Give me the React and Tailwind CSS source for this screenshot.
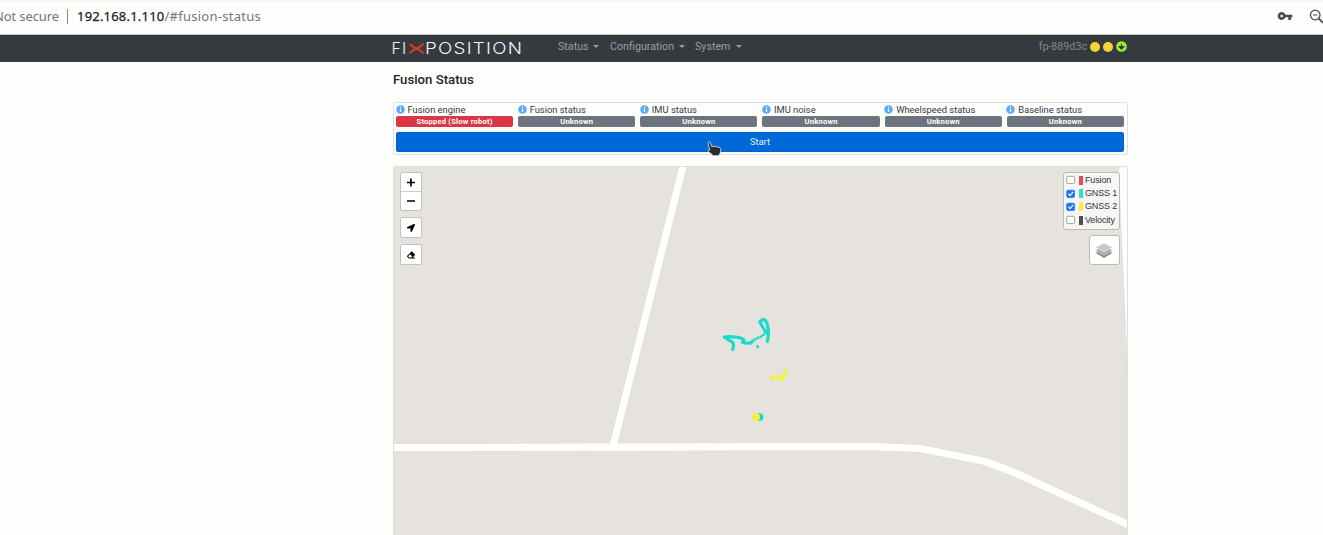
import { MdVpnKey } from "react-icons/md";
import { FaLocationArrow, FaEraser } from "react-icons/fa";

const statuses = [
  { label: "Fusion engine", value: "Stopped (Slow robot)", color: "bg-[#dc3545]" },
  { label: "Fusion status", value: "Unknown", color: "bg-[#6c757d]" },
  { label: "IMU status", value: "Unknown", color: "bg-[#6c757d]" },
  { label: "IMU noise", value: "Unknown", color: "bg-[#6c757d]" },
  { label: "Wheelspeed status", value: "Unknown", color: "bg-[#6c757d]" },
  { label: "Baseline status", value: "Unknown", color: "bg-[#6c757d]" },
];

const layers = [
  { label: "Fusion", on: false, color: "bg-[#df4e5c]" },
  { label: "GNSS 1", on: true, color: "bg-[#2fdfd0]" },
  { label: "GNSS 2", on: true, color: "bg-[#f0ee4a]" },
  { label: "Velocity", on: false, color: "bg-[#4e4e52]" },
];

function AddressBar() {
  return (
    <div className="flex h-[35px] items-start justify-between overflow-hidden border-t-2 border-b border-t-[#f7f7f6] border-b-[#c9c9c9] bg-[#fefefd] font-['Noto_Sans',sans-serif] text-[13px] leading-[18px]">
      <div className="flex pt-[5px] whitespace-nowrap text-[#757575]">
        <span className="-ml-[10px] w-[69px] text-right tracking-[-0.1px]">Not secure</span>
        <span className="mt-[2px] ml-[8px] h-[15px] w-px bg-[#8a8a8a]" />
        <span className="ml-[9px] tracking-[0.2px] text-[#222] [-webkit-text-stroke:0.25px_#222]">192.168.1.110</span>
        <span className="tracking-[0.27px]">/#fusion-status</span>
      </div>
      <div className="flex items-center pt-[6px] text-[#4a4a4a]">
        <MdVpnKey className="h-[16px] w-[16px]" />
        <svg className="ml-[16px] h-[16px] w-[14px]" viewBox="0 0 14 16" fill="none" stroke="currentColor">
          <circle cx="6.2" cy="7" r="4.8" strokeWidth="1.3" />
          <path d="M4 7h4.4" strokeWidth="1" />
          <path d="M9.6 10.4 14 14.8" strokeWidth="1.8" />
        </svg>
      </div>
    </div>
  );
}

function Logo() {
  return (
    <div className="flex h-[14px] w-[129px] items-center font-['Inter',sans-serif] text-[16px] leading-[14px] font-light whitespace-nowrap text-[#f4f4f4]">
      <span className="-ml-[1.5px] w-[17.5px] tracking-[1.2px]">FI</span>
      <svg className="h-[11px] w-[15px] shrink-0" viewBox="0 0 15 11" fill="none" stroke="#e0362b" strokeWidth="2">
        <path d="M0.5 0.9 5 4.4q2.5 1.4 5 0L14.5 0.9M0.5 10.1 5 6.6q2.5-1.4 5 0l4.5 3.5" />
      </svg>
      <span className="ml-px origin-left scale-x-[1.17] tracking-[1.1px]">POSITION</span>
    </div>
  );
}

function NavItem({ children, className }) {
  return (
    <span className={`flex items-center justify-between ${className}`}>
      {children}
      <svg className="h-[3px] w-[6px]" viewBox="0 0 6 3" fill="currentColor">
        <path d="M0 0h6L3 3z" />
      </svg>
    </span>
  );
}

function Navbar() {
  return (
    <nav className="flex h-[27px] items-center bg-[#343a40] font-['Roboto',sans-serif] text-[10.7px] leading-[14px] text-[#9a9da0]">
      <div className="ml-[393px] flex w-[734px] -translate-y-[2px] items-center">
        <div className="pt-[3px]"><Logo /></div>
        <NavItem className="ml-[36px] w-[41px]">Status</NavItem>
        <NavItem className="ml-[11px] w-[75px]">Configuration</NavItem>
        <NavItem className="ml-[10px] w-[47px]">System</NavItem>
        <div className="ml-auto flex items-center">
          <span className="text-[#85898c]">fp-889d3c</span>
          <span className="ml-[3px] h-[10px] w-[10px] rounded-full bg-[#f5d33b]" />
          <span className="ml-[3px] h-[10px] w-[10px] rounded-full bg-[#f5d33b]" />
          <svg className="ml-[3px] h-[11px] w-[11px]" viewBox="0 0 11 11">
            <circle cx="5.5" cy="5.5" r="5.3" fill="#9df22d" />
            <path d="M5.5 2.7v4M3.2 5.7l2.3 2.5 2.3-2.5z" stroke="#34402d" strokeWidth="1.2" fill="#34402d" />
          </svg>
        </div>
      </div>
    </nav>
  );
}

function StatusPanel() {
  return (
    <section className="relative mt-[15px] h-[53px] rounded-[2px] border border-[#dfdfe0] pt-px pr-[3px] pl-[2px]">
      <div className="grid grid-cols-6 gap-[5px]">
        {statuses.map((s) => (
          <div key={s.label}>
            <div className="flex h-[11px] items-center text-[9.35px] leading-[11px] whitespace-nowrap text-[#343a40]">
              <svg className="mr-[3px] -ml-[0.5px] h-[9px] w-[9px]" viewBox="0 0 9 9">
                <circle cx="4.5" cy="4.5" r="4.3" fill="#5caaf8" />
                <path d="M4.5 1.8v1.2M4.5 3.8v3.2" stroke="#fff" strokeWidth="1.2" />
              </svg>
              {s.label}
            </div>
            <div className={`${s.color} mt-px h-[11px] rounded-[2px] text-center text-[7.6px] leading-[11px] font-bold tracking-[0.2px] text-white`}>
              {s.value}
            </div>
          </div>
        ))}
      </div>
      <button className="mt-[5px] block h-[20px] w-full rounded-[2px] border border-[#0062cc] bg-[#0069d9] text-[9.4px] leading-[18px] text-[#e4effc]">
        Start
      </button>
      <svg className="absolute top-[38px] left-[313px] h-[16px] w-[15px]" viewBox="0 0 15 16">
        <path
          d="M1 1.8C1.2.5 3 .5 3.4 1.7L4.7 5.6 7 5.2l1.2.6 1.5-.3 1.3.7 1.9.3.9 1.7-.2 3.3-1.3 1.7v1.5H5.2v-1.2L1.4 10.7C.4 9.7 1.1 8.5 2.6 9z"
          fill="#2b2c2f" stroke="#e8e8ea" strokeWidth="0.8"
        />
      </svg>
    </section>
  );
}

const gnssOne = "M724.5 337.2 729 336.6 736 337 741.5 338.3 744 340 742.5 342.3 746 343.2 750.5 343 752.5 341.2M724.5 337.2 728 339.5 733 342.6 733.5 345.5 732.7 349.5M767.3 341.5 768.3 336 768.5 330 767 323.5 765 319.8 762.5 319.6 759.8 322 761.5 325 764.5 330 766.8 333";

function MapCanvas() {
  return (
    <svg className="absolute inset-0 h-full w-full" viewBox="394 167 733 368" preserveAspectRatio="xMinYMin slice" fill="none">
      <path d="M1118.5 166H1128V386z" fill="#fefefe" stroke="#dcdce4" strokeWidth="0.7" />
      <path d="M506.5 452v83M845.5 441v11" stroke="#dfddd9" strokeWidth="0.6" />
      <g stroke="#dddce0" strokeWidth="8.2">
        <path d="M684 162 613 445" />
        <path d="M393 447.7 700 446.8 870 446.4 920 448.5 985 461.5 1012 471.5 1128 524.5" strokeLinejoin="round" />
      </g>
      <g stroke="#fffffe" strokeWidth="7.2">
        <path d="M684 162 613 446" />
        <path d="M393 447.7 700 446.8 870 446.4 920 448.5 985 461.5 1012 471.5 1128 524.5" strokeLinejoin="round" />
      </g>
      <path d={gnssOne} stroke="#16dccd" strokeWidth="3.2" strokeLinecap="round" strokeLinejoin="round" />
      <path d="M752.5 341 757.5 338 762 336.2 766.5 332" stroke="#16dccd" strokeWidth="2.8" strokeLinecap="round" strokeDasharray="0.1 3" />
      <circle cx="757.7" cy="346.7" r="1.6" fill="#16dccd" />
      <path d="M771.3 379 773 376.7 775.8 376 778 378.3 781 380 783.2 378 784.3 373.5 786.7 371" stroke="#f3f139" strokeWidth="3.2" strokeLinecap="round" strokeLinejoin="round" />
      <circle cx="759.7" cy="417" r="3.8" fill="#16dccd" />
      <circle cx="756" cy="417" r="3.9" fill="#f3f139" />
    </svg>
  );
}

function MapButton({ children }) {
  return (
    <button className="flex h-[21px] w-[22px] items-center justify-center rounded-[2px] border border-[#c3c1bd] bg-white text-black">
      {children}
    </button>
  );
}

function MapView() {
  return (
    <section className="relative mt-[11px] flex h-[370px] justify-between overflow-hidden rounded-t-[2px] border border-[#dfdedc] bg-[#e6e3df] pt-[5px] pr-[7px] pl-[6px]">
      <MapCanvas />
      <div className="relative flex flex-col gap-[6px]">
        <div className="h-[39px] w-[22px] rounded-[2px] border border-[#c3c1bd] bg-white">
          <svg className="h-full w-full" viewBox="0 0 20 37" fill="none" stroke="#000" strokeWidth="1.7">
            <path d="M6 9.5h8M10 5.5v8M6 28h8" />
            <path d="M0 18.5h20" stroke="#cccccc" strokeWidth="1" />
          </svg>
        </div>
        <MapButton><FaLocationArrow className="h-[8px] w-[8px]" /></MapButton>
        <MapButton><FaEraser className="h-[8px] w-[8px]" /></MapButton>
      </div>
      <div className="relative flex flex-col items-end gap-[5px]">
        <div className="flex h-[58px] w-[57px] flex-col rounded-[3px] border border-[#bcbab7] bg-[#f7f6f5] pt-[0.5px] pl-[2px] font-['Liberation_Sans',sans-serif] text-[9px] text-[#333]">
          {layers.map((l) => (
            <div key={l.label} className="flex h-[13.3px] items-center leading-[13px] whitespace-nowrap">
              <svg className="h-[9.5px] w-[9.5px]" viewBox="0 0 9 9" fill="none">
                <rect x="0.7" y="1.2" width="7.4" height="6.8" rx="1" fill={l.on ? "#1a7af0" : "#fff"} stroke={l.on ? "#1a7af0" : "#959595"} strokeWidth="0.8" />
                {l.on && <path d="m2.2 4.6 1.6 1.7 3-3.5" stroke="#fff" strokeWidth="1.1" />}
              </svg>
              <span className={`${l.color} ml-[3.5px] h-[9px] w-[4px]`} />
              <span className="ml-[2px] tracking-[-0.15px]">{l.label}</span>
            </div>
          ))}
        </div>
        <div className="flex h-[30px] w-[31px] items-center justify-center rounded-[3px] border border-[#bcbab7] bg-white pr-[2px]">
          <svg className="h-[17px] w-[18px]" viewBox="0 0 18 17">
            <path d="m.5 11 8.5-4.4 8.5 4.4L9 16z" fill="#8c8c8c" />
            <path d="m.5 8.5 8.5-4.4 8.5 4.4L9 13.4z" fill="#a7a7a7" stroke="#fff" strokeWidth="0.4" />
            <path d="m.5 5.5L9 1l8.5 4.5L9 10.4z" fill="#c9c9c9" stroke="#fff" strokeWidth="0.4" />
          </svg>
        </div>
      </div>
    </section>
  );
}

export default function App() {
  return (
    <div className="h-[535px] w-[1323px] overflow-hidden bg-[#fefefd] font-['Roboto',sans-serif]">
      <AddressBar />
      <Navbar />
      <main className="ml-[393px] w-[735px]">
        <h1 className="pt-[9px] text-[13.2px] leading-[17px] font-medium text-[#212529]">Fusion Status</h1>
        <div className="-mt-px"><StatusPanel /></div>
        <MapView />
      </main>
    </div>
  );
}
